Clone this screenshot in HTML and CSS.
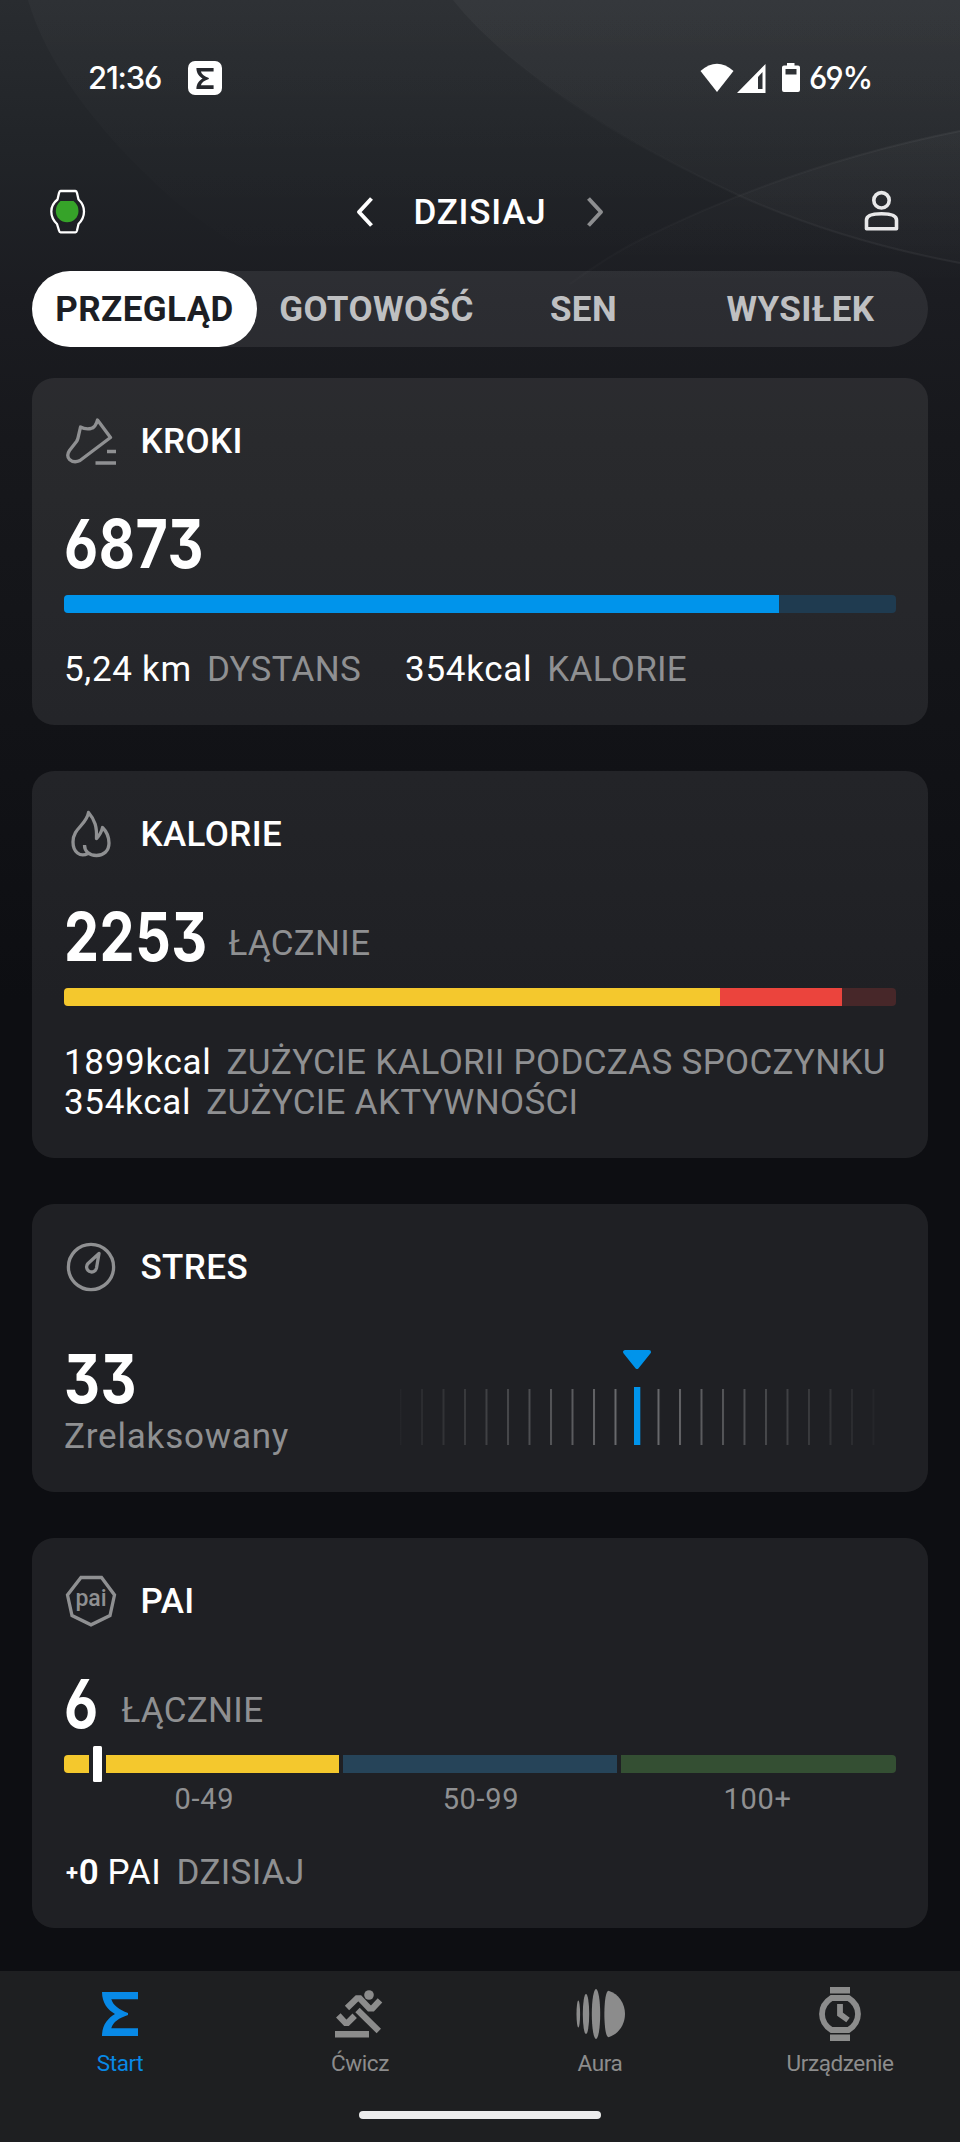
FILE: index.html
```html
<!DOCTYPE html>
<html lang="pl">
<head>
<meta charset="utf-8">
<title>Start</title>
<link rel="stylesheet" href="styles.css">
</head>
<body>
<svg width="0" height="0" class="defs">
  <symbol id="sigma" viewBox="0 0 36 44"><path d="M0 0H36V7.3H9.3C11 13 17 18 26 21V23C17 26 11 30 9.3 36.3H36V44H0C0 33 6 26 13 22C6 18 0 11 0 0Z"/></symbol>
</svg>
<div class="screen">
  <svg class="backdrop" width="960" height="400" viewBox="0 0 960 400">
    <defs>
      <linearGradient id="fade" x1="0" y1="0" x2="0" y2="270" gradientUnits="userSpaceOnUse">
        <stop offset="0" stop-color="#fff" stop-opacity=".025"/><stop offset="1" stop-color="#fff" stop-opacity="0"/>
      </linearGradient>
      <linearGradient id="fade2" x1="0" y1="0" x2="0" y2="290" gradientUnits="userSpaceOnUse">
        <stop offset="0" stop-color="#fff" stop-opacity=".035"/><stop offset="1" stop-color="#fff" stop-opacity=".01"/>
      </linearGradient>
      <linearGradient id="corner" x1="0" y1="131" x2="0" y2="290" gradientUnits="userSpaceOnUse">
        <stop offset="0" stop-color="#fff" stop-opacity=".03"/><stop offset="1" stop-color="#fff" stop-opacity="0"/>
      </linearGradient>
      <linearGradient id="arcfade" x1="470" y1="0" x2="960" y2="0" gradientUnits="userSpaceOnUse">
        <stop offset="0" stop-color="#fff" stop-opacity="0"/><stop offset="1" stop-color="#fff" stop-opacity=".05"/>
      </linearGradient>
    </defs>
    <path fill="url(#fade)" d="M28 0C45 60 95 130 170 197C210 230 250 255 300 280L960 280V0Z"/>
    <path fill="url(#fade2)" d="M453 0C500 60 600 130 740 196C810 227 880 248 960 263V0Z"/>
    <path fill="url(#corner)" d="M960 131C850 153 740 190 640 240C600 260 570 280 545 300H960Z"/>
    <path class="arc" d="M480 30C540 88 620 140 740 196C810 227 880 248 960 263"/>
    <path class="arc" d="M960 131C850 153 740 190 640 240C610 255 590 270 570 284"/>
  </svg>

  <header class="status">
    <span class="status-text time">21:36</span>
    <span class="app-badge"><svg width="18" height="21"><use href="#sigma"/></svg></span>
    <svg class="status-icons" width="108" height="38" viewBox="698 58 108 38" fill="#fff">
      <path d="M700.500 70Q717 55.500 733.500 70L717 91Z"/>
      <path fill-rule="evenodd" d="M765.500 63V92H737ZM762.500 71L758 76V88H762.500Z"/>
      <path fill-rule="evenodd" d="M787 62H794.500V64.500H798Q800 64.500 800 66.500V89Q800 91 798 91H784Q782 91 782 89V66.500Q782 64.500 784 64.500H787ZM785.500 68V73.500H796.500V68Z"/>
    </svg>
    <span class="status-text">69%</span>
  </header>

  <nav class="datebar">
    <svg width="50" height="50" viewBox="48 188 50 50">
      <path fill="none" stroke="#fff" stroke-width="2.300" stroke-linejoin="round" d="M60.500 192H75.500Q76.500 192 77 194L78.500 200.500Q84 205.500 84 212.500Q84 219.500 78.500 225L77 231.500Q76.500 233.300 75.500 233.300H60.500Q59.500 233.300 59 231.500L57 225Q51.300 219.500 51.300 212.500Q51.300 205.500 57.500 200.500L59 194Q59.500 192 60.500 192Z"/>
      <path fill="#36a329" d="M60.500 202H73.500Q78.500 206 78.500 212A11.300 11.300 0 1 1 55.800 212Q56 206 60.500 202Z"/>
    </svg>
    <div class="date">
      <svg width="18" height="32" viewBox="356 196 18 32"><path class="chevron" d="M371.500 198.500L359 212L371.500 225.500"/></svg>
      <span class="title">DZISIAJ</span>
      <svg width="18" height="32" viewBox="587 196 18 32"><path class="chevron dim" d="M589.500 198.500L602 212L589.500 225.500"/></svg>
    </div>
    <svg width="50" height="50" viewBox="862 188 50 50" fill="none" stroke="#e8e8e9" stroke-width="3.600" stroke-linejoin="round">
      <circle cx="881.500" cy="201.300" r="7.700"/>
      <path d="M866.500 229.800V221Q866.500 214.800 881.500 214.800T896.500 221V229.800Z"/>
    </svg>
  </nav>

  <div class="tabs">
    <span class="tab active">PRZEGLĄD</span><span class="tab ready">GOTOWOŚĆ</span><span class="tab sleep">SEN</span><span class="tab effort">WYSIŁEK</span>
  </div>

  <main class="cards">
    <section class="card">
      <div class="head">
        <svg class="icon" width="54" height="54" viewBox="64 414 54 54">
          <path d="M97.500 420L110.500 437.500L80 460.500Q74 463.500 69.500 459.500Q66 455.500 69.500 450.500L76.500 441.500Q77.500 440 78 438L80.500 427Q85 429.500 91 428.500Q95.500 427.500 97.500 420Z"/>
          <path d="M107 451.500H116M95.500 463H116"/>
        </svg>
        <h2 class="title">KROKI</h2>
      </div>
      <div class="big-row"><span class="big">6873</span></div>
      <div class="bar steps"><span class="fill blue" style="width:85.940%"></span></div>
      <div class="stats"><p><b>5,24 km</b><span>DYSTANS</span></p><p><b>354kcal</b><span>KALORIE</span></p></div>
    </section>

    <section class="card">
      <div class="head">
        <svg class="icon" width="54" height="54" viewBox="64 807 54 54">
          <path d="M88 853.500C80 857.500 73 852 73 842C73 828 86.500 825 88.500 812.500C95 820 97 827 96.500 838.500C100 835 101.500 832 102.500 827.500C107 832 109 837.500 109 843C109 851 103.500 855.500 96.500 855.500C89 855.500 84.500 851 84.500 845"/>
        </svg>
        <h2 class="title">KALORIE</h2>
      </div>
      <div class="big-row"><span class="big four-digits">2253</span><span class="sub">ŁĄCZNIE</span></div>
      <div class="bar burn"><span class="fill yellow" style="width:78.850%"></span><span class="fill red" style="width:14.660%"></span></div>
      <div class="stats column"><p><b>1899kcal</b><span>ZUŻYCIE KALORII PODCZAS SPOCZYNKU</span></p><p><b>354kcal</b><span>ZUŻYCIE AKTYWNOŚCI</span></p></div>
    </section>

    <section class="card">
      <div class="head">
        <svg class="icon" width="54" height="54" viewBox="64 1240 54 54">
          <circle cx="91" cy="1267" r="22.600"/>
          <path d="M99 1253.500L88 1263.500A5 5 0 1 0 96.500 1268Z"/>
        </svg>
        <h2 class="title">STRES</h2>
      </div>
      <div class="stress">
        <div class="stress-text"><span class="big">33</span><span class="sub">Zrelaksowany</span></div>
        <svg width="496" height="97" viewBox="400 1349 496 97">
          <defs>
            <pattern id="ticks" x="399.500" y="1389" width="21.500" height="56" patternUnits="userSpaceOnUse"><rect width="2" height="56" fill="#fff"/></pattern>
            <linearGradient id="edge" x1="396" x2="878" y1="0" y2="0" gradientUnits="userSpaceOnUse">
              <stop offset="0" stop-color="#fff" stop-opacity=".02"/><stop offset=".5" stop-color="#fff" stop-opacity=".36"/><stop offset="1" stop-color="#fff" stop-opacity=".02"/>
            </linearGradient>
            <mask id="tickmask"><rect x="396" y="1389" width="480" height="56" fill="url(#edge)"/></mask>
          </defs>
          <rect x="399" y="1389" width="477" height="56" fill="url(#ticks)" mask="url(#tickmask)"/>
          <rect x="632" y="1386" width="10" height="60" fill="#1f2024"/>
          <rect x="634" y="1387" width="6.300" height="58" fill="#0094eb"/>
          <path d="M625 1352H649L637 1367Z" fill="#0094eb" stroke="#0094eb" stroke-width="4" stroke-linejoin="round"/>
        </svg>
      </div>
    </section>

    <section class="card">
      <div class="head">
        <svg class="icon" width="54" height="54" viewBox="64 1574 54 54">
          <path stroke-linejoin="miter" d="M81 1577.500H101.500L114.500 1595L110 1615.500L91 1624.800L72 1615.500L67.500 1595Z"/>
          <text class="pai" x="91" y="1605.500" text-anchor="middle">pai</text>
        </svg>
        <h2 class="title">PAI</h2>
      </div>
      <div class="big-row"><span class="big one-digit">6</span><span class="sub">ŁĄCZNIE</span></div>
      <div class="ranges">
        <span class="seg low"></span><span class="seg mid"></span><span class="seg high"></span>
        <span class="marker"></span>
      </div>
      <div class="range-labels"><span>0-49</span><span>50-99</span><span>100+</span></div>
      <div class="stats"><p><b class="gain"><i class="plus">+</i><i class="zero">0</i>PAI</b><span>DZISIAJ</span></p></div>
    </section>
  </main>

  <footer class="bottom">
    <div class="nav">
      <div class="item on"><svg width="60" height="60"><use href="#sigma" x="12" y="8" width="36" height="44"/></svg><span>Start</span></div>
      <div class="item">
        <svg width="60" height="60" viewBox="330 1984 60 60">
          <circle cx="369" cy="1995" r="4.800"/>
          <path fill="none" stroke="currentColor" stroke-width="6.200" d="M347 2008L357 1998.300H359.800L369.300 2008.400H372.500L380 2000.300M357.500 2010L378.800 2031M338.300 2015.300L345.500 2023H347.500L354.700 2015.800"/>
          <path d="M335 2031H369V2037.500H335Z"/>
        </svg><span>Ćwicz</span>
      </div>
      <div class="item">
        <svg width="60" height="60" viewBox="570 1984 60 60">
          <ellipse cx="578.300" cy="2014" rx="1.800" ry="13.500"/><ellipse cx="586" cy="2014" rx="3.200" ry="20"/><ellipse cx="596" cy="2014" rx="4.200" ry="25"/>
          <path d="M608.500 1990.800C603 1990.800 603 2037.200 608.500 2037.200C619 2034 625 2024 625 2014S619 1994 608.500 1990.800Z"/>
        </svg><span>Aura</span>
      </div>
      <div class="item">
        <svg width="60" height="60" viewBox="810 1984 60 60">
          <path d="M830 1987H850V1993.500H830ZM830 2034.500H850V2041H830Z"/>
          <path fill="none" stroke="currentColor" stroke-width="5.800" d="M831.500 1998H848.500C854 2001.500 858 2007 858 2014S854 2026.500 848.500 2030H831.500C826 2026.500 822 2021 822 2014S826 2001.500 831.500 1998ZM840 2004V2014.200L848 2020"/>
        </svg><span>Urządzenie</span>
      </div>
    </div>
    <div class="home"></div>
  </footer>
</div>
</body>
</html>
```

FILE: styles.css
```css
* { box-sizing: border-box; }
body { margin: 0; background: #0d0e12; font-family: Roboto, "Noto Sans", sans-serif; color: #fff; }
svg { display: block; flex: none; }
.defs { position: absolute; }
.screen {
  position: relative; isolation: isolate; width: 960px; height: 2142px; overflow: hidden;
  display: flex; flex-direction: column;
  background: linear-gradient(#292c30 0, #212428 150px, #1b1c21 300px, #17181c 440px, #121317 720px, #0d0e12 1000px);
}
.backdrop { position: absolute; left: 0; top: 0; z-index: -1; }
.arc { fill: none; stroke: url(#arcfade); stroke-width: 2; }

.status { height: 154px; flex: none; display: flex; align-items: center; padding: 2px 88px 0; }
.status-text { font: 500 31px/40px Inter, sans-serif; font-feature-settings: "cv03", "cv04"; letter-spacing: -1.200px; }
.time { width: 99px; }
.app-badge { width: 34px; height: 34px; border-radius: 7px; background: #fff; color: #26282d; fill: currentColor; display: grid; place-items: center; margin-left: 1px; }
.status-icons { margin-left: auto; margin-right: 3px; }

.datebar { height: 117px; flex: none; display: flex; justify-content: space-between; align-items: center; padding: 0 48px 1px; }
.date { display: flex; align-items: center; gap: 39px; }
.date .title { letter-spacing: .800px; }
.chevron { fill: none; stroke: #fff; stroke-width: 4; stroke-linejoin: round; }
.dim { stroke: #8d8e90; }
.title { margin: 0; padding-top: 2px; font-size: 35px; line-height: 42px; font-weight: 500; letter-spacing: .400px; }

.tabs { height: 76px; flex: none; margin: 0 32px 31px; border-radius: 38px; background: rgba(255,255,255,.08); display: flex; }
.tab { display: grid; place-items: center; font-size: 35px; font-weight: 700; letter-spacing: .400px; color: #bfc0c2; }
.active { width: 225px; border-radius: 38px; background: #fff; color: #1c1e24; }
.ready { width: 239px; }
.sleep { width: 175px; }
.effort { width: 257px; padding-left: 2px; }

.cards { display: flex; flex-direction: column; gap: 46px; padding: 0 32px; }
.card { background: rgba(255,255,255,.077); border-radius: 22px; padding: 36px 32px 35px; }
.head { display: flex; align-items: center; gap: 22.500px; height: 54px; }
.icon { fill: none; stroke: #8f9092; stroke-width: 3.300; stroke-linejoin: round; }
.pai { font: 500 23px Roboto, sans-serif; fill: #8f9092; stroke: none; }
.big-row { display: flex; align-items: flex-start; height: 60px; margin: 46px 0 21px; }
.big { display: inline-block; font: 700 67px/60px Inter, sans-serif; font-feature-settings: "cv03", "cv04", "cv09"; letter-spacing: .700px; transform: scaleX(.830); transform-origin: 0 0; }
.four-digits { width: 164.500px; }
.one-digit { width: 57.500px; }
.sub { font-size: 35px; line-height: 42px; letter-spacing: .320px; color: #8f9092; }
.big-row .sub { margin-top: 16px; }
.bar { height: 18px; border-radius: 4px; overflow: hidden; display: flex; }
.steps { background: #1f3b50; }
.burn { background: #472729; }
.blue { background: #0094eb; }
.yellow { background: #f4c82d; }
.red { background: #eb443d; }
.stats { display: flex; gap: 44px; margin-top: 37px; font-size: 35px; line-height: 40px; white-space: nowrap; }
.stats p { margin: 0; display: flex; gap: 15px; }
.stats b { font-weight: 400; letter-spacing: .700px; }
.stats span { color: #8f9092; letter-spacing: .320px; }
.column { flex-direction: column; gap: 0; }

.stress { display: flex; justify-content: space-between; margin-top: 55px; height: 108px; }
.stress-text { display: flex; flex-direction: column; align-items: flex-start; gap: 8px; }
.stress-text .sub { line-height: 40px; letter-spacing: .800px; }

.ranges { position: relative; display: flex; gap: 4px; height: 18px; }
.seg { flex: 1; }
.low { background: #f4c82d; border-radius: 4px 0 0 4px; }
.mid { background: #264459; }
.high { background: #344f33; border-radius: 0 4px 4px 0; }
.marker { position: absolute; left: 29px; top: -9px; width: 9px; height: 36px; border-radius: 1.500px; background: #fff; box-shadow: -4px 0 #1f2024, 4px 0 #1f2024; }
.range-labels { display: grid; grid-template-columns: repeat(3, 1fr); margin-top: 9px; padding-left: 2px; text-align: center; font-size: 29px; line-height: 34px; letter-spacing: .700px; color: #8f9092; }
.gain { display: flex; padding-left: 2px; }
.gain i { font-style: normal; font-weight: 700; }
.plus { font-size: 22px; }
.stats .zero { font-weight: 600; margin-right: 8px; }

.bottom { margin-top: auto; height: 171px; flex: none; background: #1e1f21; display: flex; flex-direction: column; align-items: center; }
.nav { align-self: stretch; display: grid; grid-template-columns: repeat(4, 1fr); padding-top: 13px; }
.item { display: flex; flex-direction: column; align-items: center; color: #8c8c8c; fill: currentColor; font-size: 22.500px; line-height: 28px; letter-spacing: -.400px; gap: 5px; }
.on { color: #0889e6; }
.home { width: 242px; height: 8px; border-radius: 4px; background: #ececec; margin-top: 34px; }
```
